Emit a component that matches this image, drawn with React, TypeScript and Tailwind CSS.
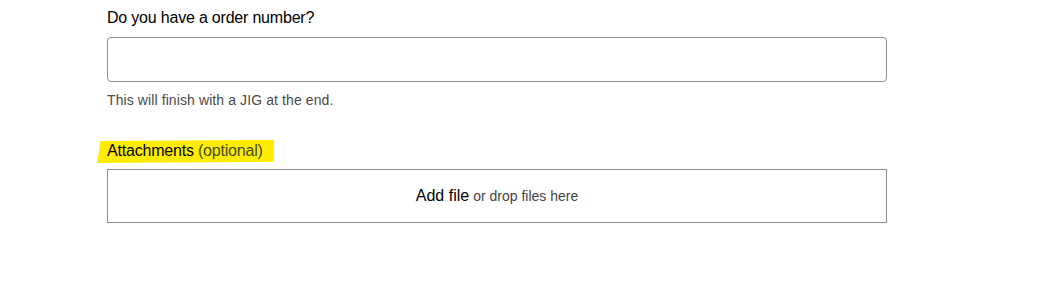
export default function App() {
  return (
    <div className="h-[286px] w-[1039px] bg-white font-['Liberation_Sans',Arial,sans-serif] text-black">
      <div className="ml-[107px] w-[780px] pt-[8px]">
        <label htmlFor="order" className="block text-[16px] leading-[20px] tracking-[-0.2px]">
          Do you have a order number?
        </label>
        <input
          id="order"
          type="text"
          className="mt-[9px] block h-[45px] w-full rounded-[4px] border border-[#8a9097] bg-white px-3 outline-none"
        />
        <p className="mt-[10px] text-[14px] leading-[16px] text-[#4a4a4a] tracking-[0.1px]">
          This will finish with a JIG at the end.
        </p>

        <div className="relative mt-[33px] h-[22px]">
          <span className="absolute left-[-10px] top-[-1px] h-[23px] w-[177px] bg-[#ffec00] [clip-path:polygon(2%_4%,100%_0,100%_95%,0_100%)]" />
          <span className="relative block text-[16px] leading-[20px] tracking-[-0.2px]">
            Attachments <span className="text-[#3f4a2a]">(optional)</span>
          </span>
        </div>

        <div className="mt-[6px] flex h-[54px] w-full items-center justify-center border border-[#8a9097]">
          <span className="text-[16px] leading-[20px] text-black">Add file</span>
          <span className="ml-[4px] text-[14px] leading-[20px] text-[#444]">or drop files here</span>
        </div>
      </div>
    </div>
  )
}
